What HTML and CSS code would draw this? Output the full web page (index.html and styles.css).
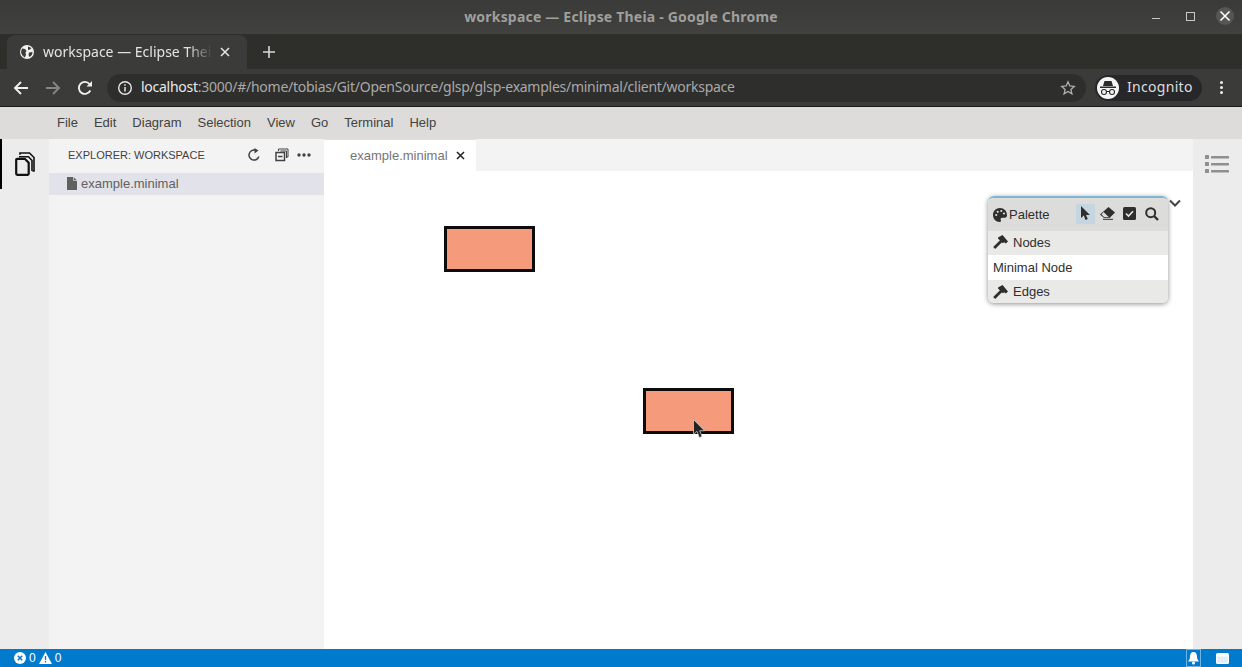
FILE: index.html
```html
<!DOCTYPE html>
<html lang="en">
<head>
  <meta charset="UTF-8">
  <title>workspace — Eclipse Theia - Google Chrome</title>
  <link rel="stylesheet" href="styles.css">
</head>
<body>
  <header class="titlebar">
    <span class="title">workspace — Eclipse Theia - Google Chrome</span>
    <div class="window-buttons">
      <span class="win-min"></span>
      <span class="win-max"></span>
      <span class="win-close">
        <svg width="12" height="12" viewBox="0 0 12 12"><path d="M1.500 1.500l9 9M10.500 1.500l-9 9" stroke="#fff" stroke-width="1.600"/></svg>
      </span>
    </div>
  </header>

  <div class="tabstrip">
    <div class="tab">
      <svg class="tab-globe" width="14" height="14" viewBox="0 0 14 14"><circle cx="7" cy="7" r="7" fill="#f1f1f1"/><path d="M2 3.500l3 .5 1.500 2-1 1.500L6 10l-1.200 2.500C3 11.500 1.300 9.500 1 7zM8 1.500l3.500 1.500-1.500 1.500-2 .5zM9 7.500l3.500-.5c0 2-1 4-3 5l-1-2z" fill="#3b3b39"/></svg>
      <span class="tab-label">workspace — Eclipse Theia</span>
      <svg class="tab-x" width="10" height="10" viewBox="0 0 10 10"><path d="M1 1l8 8M9 1l-8 8" stroke="#e8e8e8" stroke-width="1.500"/></svg>
    </div>
    <svg class="new-tab" width="14" height="14" viewBox="0 0 14 14"><path d="M7 1v12M1 7h12" stroke="#d8d8d8" stroke-width="1.600"/></svg>
  </div>

  <div class="toolbar">
    <svg class="nav-icon" width="16" height="16" viewBox="0 0 16 16"><path d="M15 8H2M8 2L2 8l6 6" fill="none" stroke="#f0f0f0" stroke-width="1.900"/></svg>
    <svg class="nav-icon" width="16" height="16" viewBox="0 0 16 16"><path d="M1 8h13M8 2l6 6-6 6" fill="none" stroke="#858585" stroke-width="1.900"/></svg>
    <svg class="nav-icon" width="16" height="16" viewBox="0 0 16 16"><path d="M13.300 10.500A6 6 0 1 1 12.500 4" fill="none" stroke="#f0f0f0" stroke-width="1.900"/><path d="M9.500 6.500H15V1z" fill="#f0f0f0"/></svg>
    <div class="omnibox">
      <svg width="16" height="16" viewBox="0 0 16 16"><circle cx="8" cy="8" r="6.300" fill="none" stroke="#e6e6e6" stroke-width="1.400"/><path d="M8 7v4.500M8 4.300v1.500" stroke="#e6e6e6" stroke-width="1.500"/></svg>
      <span class="url"><span class="url-host">localhost</span>:3000/#/home/tobias/Git/OpenSource/glsp/glsp-examples/minimal/client/workspace</span>
      <svg class="star" width="16" height="16" viewBox="0 0 16 16"><path d="M8 1.800l1.800 4.200 4.500.4-3.400 3 1 4.400L8 11.500l-3.900 2.300 1-4.400-3.400-3 4.500-.4z" fill="none" stroke="#b0b0b0" stroke-width="1.300"/></svg>
    </div>
    <div class="incognito">
      <span class="incognito-face">
        <svg width="18" height="16" viewBox="0 0 18 16"><path d="M5.500 1h7l1.500 5H4zM1 6.500h16V8H1z" fill="#2a2a2c"/><circle cx="5" cy="12" r="2.500" fill="none" stroke="#2a2a2c" stroke-width="1.100"/><circle cx="13" cy="12" r="2.500" fill="none" stroke="#2a2a2c" stroke-width="1.100"/><path d="M7.500 11.500h3" stroke="#2a2a2c"/></svg>
      </span>
      <span class="incognito-label">Incognito</span>
    </div>
    <div class="kebab"><i></i><i></i><i></i></div>
  </div>

  <nav class="menubar">
    <span>File</span><span>Edit</span><span>Diagram</span><span>Selection</span><span>View</span><span>Go</span><span>Terminal</span><span>Help</span>
  </nav>

  <main class="shell">
    <aside class="activity">
      <svg width="20" height="24" viewBox="0 0 20 24"><path d="M5 2.800V1h9.500L19 5.500V19h-1.500" fill="none" stroke="#111" stroke-width="1.600"/><path d="M4 4.800h9.500L17 8.500V19" fill="none" stroke="#111" stroke-width="1.600"/><path d="M1.200 7.800a1 1 0 0 1 1-1h7.600l3.900 3.900v11.100a1 1 0 0 1-1 1H2.200a1 1 0 0 1-1-1z" fill="none" stroke="#111" stroke-width="2.200"/></svg>
    </aside>

    <section class="sidebar">
      <div class="sidebar-head">
        <span class="sidebar-title">EXPLORER: WORKSPACE</span>
        <div class="sidebar-actions">
          <svg width="14" height="14" viewBox="0 0 14 14"><path d="M11.800 8.500A5 5 0 1 1 8.500 2.300" fill="none" stroke="#424242" stroke-width="1.500"/><path d="M7.500 0v5.500L11.500 2.500z" fill="#424242"/></svg>
          <svg width="14" height="14" viewBox="0 0 14 14"><path d="M3.500 3V1h9.500v8h-2M5.500 3h6v7" fill="none" stroke="#424242"/><rect x="1" y="4.500" width="8.500" height="8" fill="none" stroke="#424242" stroke-width="1.500"/><path d="M3 8.500h4.500" stroke="#424242" stroke-width="1.500"/></svg>
          <svg class="more-icon" width="14" height="6" viewBox="0 0 14 6"><circle cx="2" cy="3" r="1.700" fill="#424242"/><circle cx="7" cy="3" r="1.700" fill="#424242"/><circle cx="12" cy="3" r="1.700" fill="#424242"/></svg>
        </div>
      </div>
      <div class="file-row">
        <svg width="10" height="13" viewBox="0 0 10 13"><path d="M0 0h6.500L10 3.500V13H0z" fill="#616161"/><path d="M6.500 0v3.500H10" fill="none" stroke="#e1e2ea" stroke-width=".7"/></svg>
        <span>example.minimal</span>
      </div>
    </section>

    <section class="editor">
      <div class="editor-tabs">
        <div class="editor-tab">
          <span>example.minimal</span>
          <svg width="9" height="9" viewBox="0 0 9 9"><path d="M1 1l7 7M8 1L1 8" stroke="#222" stroke-width="1.500"/></svg>
        </div>
      </div>
      <div class="canvas">
        <div class="node node-a"></div>
        <div class="node node-b"></div>
        <svg class="pointer" width="13" height="20" viewBox="0 0 13 20"><path d="M.5.500v15l3.500-3.200 2.300 6.200 2.700-1.100-2.300-5.600h4.800z" fill="#222" stroke="#ccc" stroke-width=".8"/></svg>

        <div class="palette">
          <div class="palette-head">
            <svg width="14" height="14" viewBox="0 0 14 14"><path d="M7 0C3 0 0 3 0 7s3 7 6.500 7c1.500 0 1.800-1 1.300-2-.6-1.200 0-2.200 1.400-2.200H12c1.300 0 2-1 2-2.500C14 3 11 0 7 0z" fill="#2f2f2f"/><circle cx="3.200" cy="7" r="1.100" fill="#dcdcda"/><circle cx="4.700" cy="3.800" r="1.100" fill="#dcdcda"/><circle cx="8.300" cy="3" r="1.100" fill="#dcdcda"/><circle cx="11" cy="5.500" r="1.100" fill="#dcdcda"/></svg>
            <span class="palette-title">Palette</span>
            <div class="palette-tools">
              <span class="tool tool-active"><svg width="10" height="15" viewBox="0 0 10 15"><path d="M0 0v12l2.800-2.500L4.500 14l2.300-1-1.800-4H9z" fill="#2f2f2f"/></svg></span>
              <span class="tool"><svg width="15" height="13" viewBox="0 0 15 13"><path d="M8.500 0L15 5.500 9.500 11H4L0 7.500z" fill="#2f2f2f"/><path d="M3.500 5l5.500 5.300H4.300L1.500 7.500z" fill="#dcdcda"/><path d="M3 12.300h10" stroke="#2f2f2f"/></svg></span>
              <span class="tool"><svg width="13" height="13" viewBox="0 0 13 13"><rect width="13" height="13" rx="1.500" fill="#2f2f2f"/><path d="M3 6.500l2.500 2.500L10 4.300" fill="none" stroke="#e8e8e8" stroke-width="1.600"/></svg></span>
              <span class="tool"><svg width="14" height="14" viewBox="0 0 14 14"><circle cx="5.700" cy="5.700" r="4.500" fill="none" stroke="#2f2f2f" stroke-width="2"/><path d="M9 9l4 4" stroke="#2f2f2f" stroke-width="2.400"/></svg></span>
            </div>
          </div>
          <div class="palette-group">
            <svg width="15" height="14" viewBox="0 0 15 14"><path d="M1.200 13L9 5.200" stroke="#2f2f2f" stroke-width="2.800"/><path d="M5 2.500L9.500 0 15 6.500l-2.200 2-1.600-1.300-1.400 1.100L5 3.500z" fill="#2f2f2f"/></svg>
            <span>Nodes</span>
          </div>
          <div class="palette-item">Minimal Node</div>
          <div class="palette-group palette-group-last">
            <svg width="15" height="14" viewBox="0 0 15 14"><path d="M1.200 13L9 5.200" stroke="#2f2f2f" stroke-width="2.800"/><path d="M5 2.500L9.500 0 15 6.500l-2.200 2-1.600-1.300-1.400 1.100L5 3.500z" fill="#2f2f2f"/></svg>
            <span>Edges</span>
          </div>
        </div>
        <svg class="palette-toggle" width="12" height="8" viewBox="0 0 12 8"><path d="M1 1.500l5 5 5-5" fill="none" stroke="#444" stroke-width="2"/></svg>
      </div>
    </section>

    <aside class="right-bar">
      <svg width="24" height="20" viewBox="0 0 24 20"><g fill="#8f8f8f"><rect x="0" y="1" width="4" height="4" rx=".5"/><rect x="0" y="8" width="4" height="4" rx=".5"/><rect x="0" y="15" width="4" height="4" rx=".5"/><rect x="6" y="2" width="18" height="2.500" rx=".5"/><rect x="6" y="9" width="18" height="2.500" rx=".5"/><rect x="6" y="16" width="18" height="2.500" rx=".5"/></g></svg>
    </aside>
  </main>

  <footer class="statusbar">
    <div class="status-group">
      <svg width="12" height="12" viewBox="0 0 12 12"><circle cx="6" cy="6" r="6" fill="#fff"/><path d="M3.800 3.800l4.400 4.400M8.200 3.800L3.800 8.200" stroke="#007acc" stroke-width="1.500"/></svg>
      <span>0</span>
      <svg width="13" height="12" viewBox="0 0 13 12"><path d="M6.500 0L13 12H0z" fill="#fff"/><path d="M6.500 4v4M6.500 9v1.500" stroke="#007acc" stroke-width="1.300"/></svg>
      <span>0</span>
    </div>
    <div class="status-group status-right">
      <span class="bell"><svg width="11" height="13" viewBox="0 0 11 13"><path d="M5.500 0C7.800 0 9 2 9 4.500c0 2.500 1 3.500 2 5H0c1-1.500 2-2.500 2-5C2 2 3.200 0 5.500 0z" fill="#fff"/><circle cx="5.500" cy="11" r="1.500" fill="#fff"/></svg></span>
      <svg width="13" height="11" viewBox="0 0 13 11"><rect width="13" height="11" rx="1.500" fill="#fff"/><rect x="1.200" y="3.500" width="10.600" height="6.300" fill="#dff0fb"/></svg>
    </div>
  </footer>
</body>
</html>
```

FILE: styles.css
```css
html, body {
  height: 100%;
}

body {
  margin: 0;
  display: flex;
  flex-direction: column;
  overflow: hidden;
  font-family: "Liberation Sans", Arial, sans-serif;
  background: #fff;
}

.titlebar {
  position: relative;
  height: 34px;
  flex: none;
  display: flex;
  align-items: center;
  justify-content: center;
  background: linear-gradient(#3a3a38, #41413f);
}

.title {
  margin-bottom: 2px;
  font-family: "Noto Sans", sans-serif;
  font-size: 14px;
  font-weight: 700;
  letter-spacing: .2px;
  color: #9f9f9d;
}

.window-buttons {
  position: absolute;
  right: 8px;
  top: 7px;
  display: flex;
  align-items: center;
  gap: 21px;
}

.win-min {
  width: 8px;
  height: 1px;
  margin-top: 5px;
  margin-right: 5px;
  background: #c8c8c8;
}

.win-max {
  width: 7px;
  height: 7px;
  border: 1px solid #c8c8c8;
}

.win-close {
  width: 18px;
  height: 18px;
  border-radius: 50%;
  background: #565654;
  display: flex;
  align-items: center;
  justify-content: center;
}

.tabstrip {
  height: 35px;
  flex: none;
  box-sizing: border-box;
  padding: 1px 0 0 7px;
  display: flex;
  align-items: center;
  background: #2e2e2b;
}

.tab {
  width: 240px;
  height: 34px;
  box-sizing: border-box;
  padding: 0 11px 0 13px;
  display: flex;
  align-items: center;
  background: #3b3b39;
  border-radius: 8px 8px 0 0;
}

.tab-label {
  width: 170px;
  margin-left: 9px;
  margin-bottom: 2px;
  overflow: hidden;
  white-space: nowrap;
  font-family: "Noto Sans", sans-serif;
  font-size: 14px;
  color: #e4e4e4;
  -webkit-mask-image: linear-gradient(90deg, #000 85%, transparent);
  mask-image: linear-gradient(90deg, #000 85%, transparent);
}

.tab-x {
  margin-left: 7px;
}

.new-tab {
  margin-left: 15px;
}

.toolbar {
  height: 37px;
  flex: none;
  box-sizing: border-box;
  padding: 0 12px 0 13px;
  display: flex;
  align-items: center;
  background: #3b3b39;
}

.nav-icon {
  margin-right: 16px;
}

.omnibox {
  width: 979px;
  height: 28px;
  margin-left: -2px;
  box-sizing: border-box;
  padding: 0 10px;
  display: flex;
  align-items: center;
  border-radius: 14px;
  background: #2e2e2c;
}

.url {
  margin-left: 8px;
  margin-bottom: 2px;
  font-family: "Noto Sans", sans-serif;
  font-size: 14px;
  letter-spacing: -.26px;
  color: #a9a9a9;
}

.url-host {
  color: #e8e8e8;
}

.star {
  margin-left: auto;
}

.incognito {
  width: 107px;
  height: 26px;
  margin-left: 9px;
  padding-left: 2px;
  box-sizing: border-box;
  display: flex;
  align-items: center;
  border-radius: 13px;
  background: #27272a;
}

.incognito-face {
  width: 22px;
  height: 22px;
  border-radius: 50%;
  background: #f4f4f4;
  display: flex;
  align-items: center;
  justify-content: center;
}

.incognito-label {
  margin-left: 8px;
  margin-bottom: 2px;
  font-family: "Noto Sans", sans-serif;
  font-size: 14px;
  letter-spacing: .3px;
  color: #dedede;
}

.kebab {
  margin-left: 18px;
  display: flex;
  flex-direction: column;
  gap: 2px;
}

.kebab i {
  display: block;
  width: 3px;
  height: 3px;
  border-radius: 50%;
  background: #eee;
}

.menubar {
  height: 33px;
  flex: none;
  box-sizing: border-box;
  border-top: 1px solid #1b1b1b;
  padding: 0 0 2px 49px;
  display: flex;
  align-items: center;
  background: #dddcda;
  font-size: 13px;
  color: #424242;
}

.menubar span {
  padding: 0 8px;
}

.shell {
  flex: 1;
  min-height: 0;
  display: flex;
  background: linear-gradient(90deg, #ececec 49px, transparent 49px);
}

.activity {
  width: 49px;
  height: 50px;
  flex: none;
  box-sizing: border-box;
  border-left: 2px solid #000;
  padding: 13px 0 0 13px;
}

.sidebar {
  width: 275px;
  flex: none;
  background: #f3f3f3;
}

.sidebar-head {
  height: 34px;
  box-sizing: border-box;
  padding: 0 13px 2px 19px;
  display: flex;
  align-items: center;
  justify-content: space-between;
}

.sidebar-title {
  font-size: 11px;
  color: #424242;
}

.sidebar-actions {
  display: flex;
  align-items: center;
  gap: 14px;
}

.more-icon {
  margin-left: -6px;
}

.file-row {
  height: 22px;
  box-sizing: border-box;
  padding: 0 0 2px 18px;
  display: flex;
  align-items: center;
  gap: 4px;
  background: #e1e2ea;
  font-size: 13px;
  color: #616161;
}

.editor {
  flex: 1;
  min-width: 0;
  display: flex;
  flex-direction: column;
  background: #fff;
}

.editor-tabs {
  height: 32px;
  flex: none;
  background: #f3f3f3;
  display: flex;
}

.editor-tab {
  width: 152px;
  box-sizing: border-box;
  padding: 0 11px 0 26px;
  display: flex;
  align-items: center;
  justify-content: space-between;
  background: #fff;
  border-top: 1px solid #cfe3f2;
  font-size: 13px;
  color: #757575;
}

.canvas {
  position: relative;
  flex: 1;
}

.node {
  position: absolute;
  width: 85px;
  height: 40px;
  border: 3px solid #0c0c0c;
  background: #f59a7a;
}

.node-a {
  left: 120px;
  top: 55px;
}

.node-b {
  left: 319px;
  top: 217px;
}

.pointer {
  position: absolute;
  left: 369px;
  top: 248px;
}

.palette {
  position: absolute;
  left: 664px;
  top: 25px;
  width: 180px;
  border-top: 2px solid #7fb6d6;
  border-radius: 6px;
  overflow: hidden;
  box-shadow: 0 1px 5px rgba(0, 0, 0, .45);
  font-size: 13px;
  color: #2f2f2f;
}

.palette-head {
  height: 33px;
  box-sizing: border-box;
  padding-left: 5px;
  display: flex;
  align-items: center;
  background: #dcdcda;
}

.palette-title {
  margin-left: 2px;
}

.palette-tools {
  margin-left: auto;
  margin-right: 7px;
  margin-bottom: 2px;
  display: flex;
  align-items: center;
  gap: 3px;
}

.tool {
  width: 19px;
  height: 20px;
  display: flex;
  align-items: center;
  justify-content: center;
}

.tool-active {
  background: #c5d6e0;
}

.palette-group {
  height: 24px;
  box-sizing: border-box;
  padding: 0 0 2px 5px;
  display: flex;
  align-items: center;
  gap: 5px;
  background: #e9e9e8;
}

.palette-group-last {
  height: 23px;
  padding-bottom: 0;
}

.palette-item {
  height: 25px;
  box-sizing: border-box;
  padding-left: 5px;
  display: flex;
  align-items: center;
  background: #fff;
}

.palette-toggle {
  position: absolute;
  left: 845px;
  top: 28px;
}

.right-bar {
  width: 49px;
  flex: none;
  box-sizing: border-box;
  padding: 15px 0 0 12px;
  background: #ececec;
}

.statusbar {
  height: 18px;
  flex: none;
  box-sizing: border-box;
  padding: 0 13px 0 14px;
  display: flex;
  align-items: center;
  justify-content: space-between;
  background: #007acc;
  font-size: 12px;
  color: #fff;
}

.status-group {
  display: flex;
  align-items: center;
  gap: 3px;
}

.status-right {
  gap: 15px;
}

.bell {
  width: 13px;
  height: 16px;
  border: 1px solid #6cb4e4;
  display: flex;
  align-items: center;
  justify-content: center;
}
```
